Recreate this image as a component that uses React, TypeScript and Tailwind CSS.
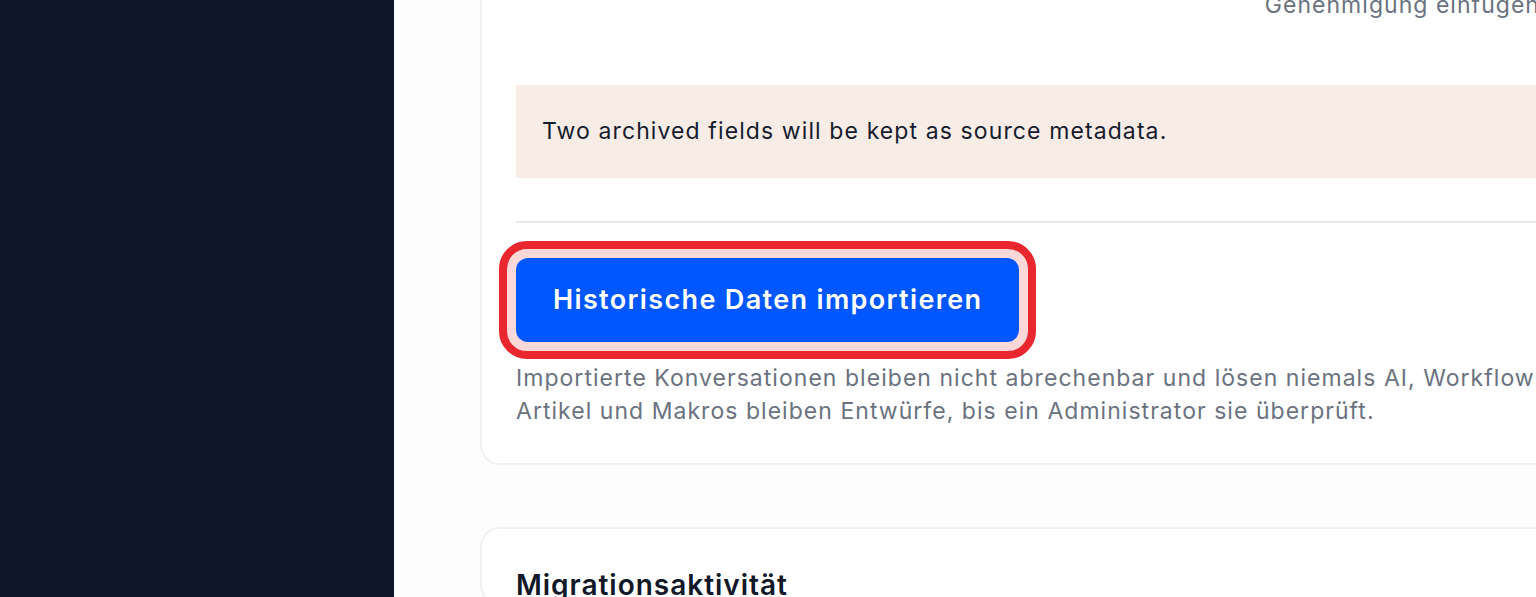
export default function App() {
  return (
    <div
      className="flex h-[597px] w-[1536px] overflow-hidden bg-white"
      style={{ fontFamily: 'Inter, "Noto Sans", sans-serif' }}
    >
      {/* dark navigation rail */}
      <aside className="w-[394px] shrink-0 bg-[#0f1629]" />

      {/* scrolling content column */}
      <main className="flex min-w-0 flex-1 flex-col bg-[#fdfdfd] pl-[86px]">
        {/* import settings card */}
        <section className="-mt-[49px] w-[1096px] shrink-0 rounded-[20px] border-2 border-[#f1f1f3] bg-white px-[34px] pb-[35px] pt-[36px]">
          <div className="flex justify-end">
            <span className="text-[23px] leading-[33px] tracking-[0.045em] text-[#6b7280]">
              Genehmigung einfügen
            </span>
          </div>

          <div className="mt-[63px] bg-[#f8ece6] px-[26px] py-[30px]">
            <p className="text-[23px] leading-[33px] tracking-[0.048em] text-[#161c2e]">
              Two archived fields will be kept as source metadata.
            </p>
          </div>

          <div className="mt-[43px] h-[2px] bg-[#e6e7eb]" />

          {/* focused primary action */}
          <div className="-ml-[17px] mt-[18px] inline-flex rounded-[28px] border-[8px] border-[#ea262e] bg-[#fcd8d8] p-[9px]">
            <button
              type="button"
              className="h-[84px] rounded-[12px] bg-[#0057ff] px-[37px] text-[27px] font-semibold tracking-[0.05em] text-white"
            >
              Historische Daten importieren
            </button>
          </div>

          <p className="mt-[3px] whitespace-nowrap text-[23px] leading-[33px] tracking-[0.045em] text-[#6b7280]">
            Importierte Konversationen bleiben nicht abrechenbar und lösen niemals AI, Workflows oder
            Benachrichtigungen aus.
            <br />
            Artikel und Makros bleiben Entwürfe, bis ein Administrator sie überprüft.
          </p>
        </section>

        {/* activity card */}
        <section className="mt-[62px] w-[1096px] shrink-0 rounded-[20px] border-2 border-[#f1f1f3] bg-white px-[34px] pt-[38px]">
          <h2 className="text-[28px] font-semibold leading-[36px] tracking-[0.035em] text-[#111827]">
            Migrationsaktivität
          </h2>
        </section>
      </main>
    </div>
  );
}
